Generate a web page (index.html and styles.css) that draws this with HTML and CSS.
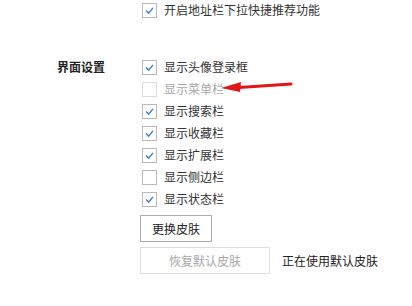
FILE: index.html
```html
<!DOCTYPE html>
<html lang="zh-CN">
<head>
<meta charset="utf-8">
<link rel="stylesheet" href="styles.css">
</head>
<body>
<div class="page">
  <div class="row top-row">
    <span class="cb on"><svg viewBox="0 0 15 15"><polyline points="3.5,7.5 6.5,10.5 11.5,4.5"/></svg></span>
    <span class="lbl">开启地址栏下拉快捷推荐功能</span>
  </div>
  <div class="section">
    <div class="sec-title">界面设置</div>
    <div class="options">
      <div class="row"><span class="cb on"><svg viewBox="0 0 15 15"><polyline points="3.5,7.5 6.5,10.5 11.5,4.5"/></svg></span><span class="lbl">显示头像登录框</span></div>
      <div class="row disabled"><span class="cb"></span><span class="lbl">显示菜单栏</span></div>
      <div class="row"><span class="cb on"><svg viewBox="0 0 15 15"><polyline points="3.5,7.5 6.5,10.5 11.5,4.5"/></svg></span><span class="lbl">显示搜索栏</span></div>
      <div class="row"><span class="cb on"><svg viewBox="0 0 15 15"><polyline points="3.5,7.5 6.5,10.5 11.5,4.5"/></svg></span><span class="lbl">显示收藏栏</span></div>
      <div class="row"><span class="cb on"><svg viewBox="0 0 15 15"><polyline points="3.5,7.5 6.5,10.5 11.5,4.5"/></svg></span><span class="lbl">显示扩展栏</span></div>
      <div class="row"><span class="cb"></span><span class="lbl">显示侧边栏</span></div>
      <div class="row"><span class="cb on"><svg viewBox="0 0 15 15"><polyline points="3.5,7.5 6.5,10.5 11.5,4.5"/></svg></span><span class="lbl">显示状态栏</span></div>
      <div class="btn-row"><button class="btn">更换皮肤</button></div>
      <div class="btn-row"><button class="btn wide" disabled>恢复默认皮肤</button><span class="note">正在使用默认皮肤</span></div>
    </div>
  </div>
  <svg class="arrow" width="80" height="20" viewBox="0 0 80 20">
    <line x1="18" y1="9.5" x2="70" y2="6" stroke="#e0161b" stroke-width="3" stroke-linecap="round"/>
    <polygon points="0,10 20,4 19,14" fill="#e0161b"/>
  </svg>
</div>
</body>
</html>
```
FILE: styles.css
```css
html, body {
  margin: 0;
  padding: 0;
  background: #ffffff;
}
.page {
  position: relative;
  width: 412px;
  height: 306px;
  font-family: "Noto Sans CJK SC", "Microsoft YaHei", sans-serif;
  font-size: 12px;
  color: #333333;
  overflow: hidden;
}
.row {
  display: flex;
  align-items: center;
  height: 22px;
}
.top-row {
  margin-top: -1px;
  padding-left: 142px;
}
.cb {
  box-sizing: border-box;
  width: 15px;
  height: 15px;
  border: 1px solid #b9b9b9;
  background: #fff;
  display: flex;
}
.cb svg {
  width: 13px;
  height: 13px;
  fill: none;
  stroke: #3b7fd0;
  stroke-width: 1.6;
}
.lbl {
  margin-left: 7px;
  line-height: 1;
}
.disabled .cb {
  border-color: #dcdcdc;
}
.disabled .lbl {
  color: #a8a8a8;
}
.section {
  display: flex;
  margin-top: 35px;
}
.sec-title {
  width: 83px;
  padding-left: 57px;
  font-weight: bold;
  color: #222;
  height: 22px;
  line-height: 22px;
}
.options {
  display: flex;
  flex-direction: column;
}
.options .row {
  padding-left: 2px;
}
.btn-row {
  display: flex;
  align-items: center;
  margin-top: 5px;
}
.btn {
  box-sizing: border-box;
  height: 27px;
  width: 72px;
  padding: 0;
  border: 1px solid #adadad;
  background: #fff;
  font-family: inherit;
  font-size: 12px;
  color: #222;
}
.btn.wide {
  width: 130px;
  border-color: #dedede;
  color: #a8a8a8;
}
.note {
  margin-left: 12px;
  color: #222;
}
.arrow {
  position: absolute;
  left: 221px;
  top: 78px;
}
```
